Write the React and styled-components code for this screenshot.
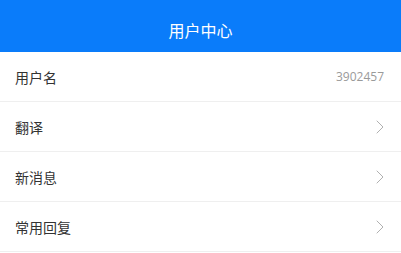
import React from 'react';
import styled, { createGlobalStyle } from 'styled-components';

const GlobalStyle = createGlobalStyle`
    body {
        margin: 0;
        background: #fff;
        font-family: "Noto Sans CJK SC", "Liberation Sans", sans-serif;
    }
`;

const Page = styled.div`
    width: 401px;
    height: 253px;
    overflow: hidden;
    background: #fff;
`;

const Header = styled.header`
    height: 52px;
    background: #0a7cfa;
    color: #fff;
    display: flex;
    align-items: center;
    justify-content: center;
    font-size: 16px;
    padding-top: 8px;
    box-sizing: border-box;
`;

const List = styled.ul`
    list-style: none;
    margin: 0;
    padding: 0;
`;

const Row = styled.li`
    height: 50px;
    box-sizing: border-box;
    border-bottom: 1px solid #efefef;
    display: flex;
    align-items: center;
    justify-content: space-between;
    padding: 0 17px 0 15px;
`;

const Label = styled.span`
    font-size: 14px;
    color: #333;
`;

const Value = styled.span`
    font-family: "Open Sans", sans-serif;
    font-size: 12px;
    color: #9a9a9a;
`;

const Chevron = () => (
    <svg width="8" height="14" viewBox="0 0 8 14" fill="none">
        <path d="M1 1l6 6-6 6" stroke="#b0b0b0" strokeWidth="1" strokeLinecap="round" strokeLinejoin="round" />
    </svg>
);

const items = [
    { label: '用户名', value: '3902457' },
    { label: '翻译' },
    { label: '新消息' },
    { label: '常用回复' },
];

const App = () => (
    <Page>
        <GlobalStyle />
        <Header>用户中心</Header>
        <List>
            {items.map((item) => (
                <Row key={item.label}>
                    <Label>{item.label}</Label>
                    {item.value ? <Value>{item.value}</Value> : <Chevron />}
                </Row>
            ))}
        </List>
    </Page>
);

export default App;
